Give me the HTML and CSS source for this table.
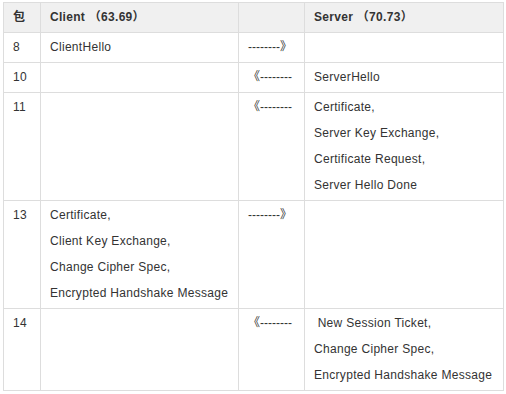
FILE: index.html
```html
<!DOCTYPE html>
<html>
<head>
<meta charset="utf-8">
<link rel="stylesheet" href="styles.css">
</head>
<body>
<table class="flow">
<colgroup><col class="c-no"><col class="c-side"><col class="c-arrow"><col class="c-side2"></colgroup>
<thead>
<tr><th>包</th><th>Client&nbsp;（63.69）</th><th></th><th>Server&nbsp;（70.73）</th></tr>
</thead>
<tbody>
<tr><td>8</td><td>ClientHello</td><td class="arrow">--------》</td><td></td></tr>
<tr><td>10</td><td></td><td class="arrow">《--------</td><td>ServerHello</td></tr>
<tr><td>11</td><td></td><td class="arrow">《--------</td><td>Certificate,<br>Server Key Exchange,<br>Certificate Request,<br>Server Hello Done</td></tr>
<tr><td>13</td><td>Certificate,<br>Client Key Exchange,<br>Change Cipher Spec,<br>Encrypted Handshake Message</td><td class="arrow">--------》</td><td></td></tr>
<tr><td>14</td><td></td><td class="arrow">《--------</td><td>&nbsp;New Session Ticket,<br>Change Cipher Spec,<br>Encrypted Handshake Message</td></tr>
</tbody>
</table>
</body>
</html>
```
FILE: styles.css
```css
html, body { margin: 0; padding: 0; background: #fff; }
body { font-family: "Liberation Sans", Arial, "Noto Sans CJK SC", sans-serif; font-size: 12px; color: #333; }
.flow { border-collapse: collapse; table-layout: fixed; width: 500px; margin: 2px 0 0 3px; }
.c-no { width: 37px; }
.c-side { width: 198px; }
.c-arrow { width: 66px; }
.c-side2 { width: 199px; }
.flow th, .flow td { border: 1px solid #dddddd; padding: 1px 9px 2px 9px; line-height: 26px; text-align: left; vertical-align: top; white-space: nowrap; letter-spacing: 0.3px; }
.flow th { background: #f0f0f0; font-weight: bold; }
.flow td.arrow { letter-spacing: 0; }
```
